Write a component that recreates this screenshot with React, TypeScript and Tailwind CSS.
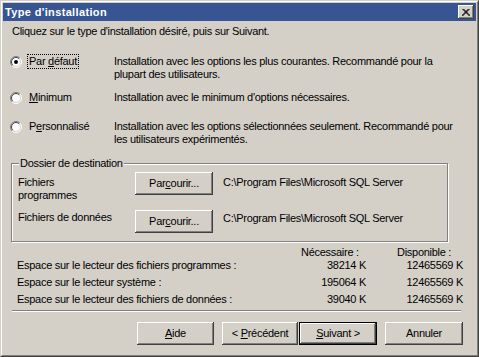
const BTN = 'shadow-[inset_-1px_-1px_0_#404040,inset_1px_1px_0_#ffffff,inset_-2px_-2px_0_#808080]'

function Radio({ checked }: { checked?: boolean }) {
  return (
    <svg width="12" height="12" viewBox="0 0 12 12" className="flex-shrink-0">
      <circle cx="6" cy="6" r="5" fill="#ffffff" />
      <path d="M2.1 9.9 A5.5 5.5 0 0 1 9.9 2.1" fill="none" stroke="#808080" />
      <path d="M9.9 2.1 A5.5 5.5 0 0 1 2.1 9.9" fill="none" stroke="#ffffff" />
      <path d="M2.8 9.2 A4.5 4.5 0 0 1 9.2 2.8" fill="none" stroke="#404040" />
      <path d="M9.2 2.8 A4.5 4.5 0 0 1 2.8 9.2" fill="none" stroke="#d4d0c8" />
      {checked && <circle cx="6" cy="6" r="2" fill="#000000" />}
    </svg>
  )
}

function Button({ children, width, def }: { children: React.ReactNode; width: string; def?: boolean }) {
  return (
    <div
      className={`flex items-center justify-center h-[23px] bg-[#d4d0c8] ${BTN} ${width} ${
        def ? 'outline outline-1 outline-black -outline-offset-1 shadow-[inset_-2px_-2px_0_#404040,inset_2px_2px_0_#ffffff,inset_-3px_-3px_0_#808080]' : ''
      }`}
    >
      {children}
    </div>
  )
}

const OPTIONS = [
  {
    label: <><span>Par </span><span className="underline">d</span><span>éfaut</span></>,
    desc: ['Installation avec les options les plus courantes. Recommandé pour la', 'plupart des utilisateurs.'],
    checked: true,
    mt: 'mt-[17px]',
  },
  {
    label: <><span className="underline">M</span><span>inimum</span></>,
    desc: ["Installation avec le minimum d'options nécessaires."],
    mt: 'mt-[10px]',
  },
  {
    label: <><span>P</span><span className="underline">e</span><span>rsonnalisé</span></>,
    desc: ['Installation avec les options sélectionnées seulement. Recommandé pour', 'les utilisateurs expérimentés.'],
    mt: 'mt-[16px]',
  },
]

const SPACE = [
  { label: 'Espace sur le lecteur des fichiers programmes :', need: '38214 K', free: '12465569 K' },
  { label: 'Espace sur le lecteur système :', need: '195064 K', free: '12465569 K' },
  { label: 'Espace sur le lecteur des fichiers de données :', need: '39040 K', free: '12465569 K' },
]

export default function App() {
  return (
    <div className="w-[479px] h-[357px] font-['Liberation_Sans',Arial,sans-serif] text-[11px] leading-[13px] tracking-[-0.28px] text-black border border-t-[#d4d0c8] border-l-[#d4d0c8] border-r-[#404040] border-b-[#404040]">
      <div className="h-full flex flex-col bg-[#d4d0c8] border border-t-white border-l-white border-r-[#808080] border-b-[#808080] p-[1px]">
        {/* Title bar */}
        <div className="h-[18px] flex items-center justify-between bg-[#375592] pl-[2px] pr-[2px]">
          <span className="text-white font-bold text-[11px] tracking-[0.35px]">Type d'installation</span>
          <div className={`w-[16px] h-[14px] bg-[#d4d0c8] flex items-center justify-center ${BTN}`}>
            <svg width="8" height="7" viewBox="0 0 8 7">
              <path d="M0.5 0 L7.5 7 M1.5 0 L8.5 7 M7.5 0 L0.5 7 M6.5 0 L-0.5 7" stroke="#000" strokeWidth="1" />
            </svg>
          </div>
        </div>

        {/* Body */}
        <div className="flex flex-col">
          <p className="mt-[4px] ml-[9px]">Cliquez sur le type d'installation désiré, puis sur Suivant.</p>

          {OPTIONS.map((o, i) => (
            <div key={i} className={`flex items-start ${o.mt}`}>
              <div className="ml-[7px] w-[104px] flex items-center gap-[6px]">
                <Radio checked={o.checked} />
                <span className={o.checked ? 'border border-dotted border-black px-[1px] -my-[1px] -ml-[1px]' : 'pl-[1px]'}>{o.label}</span>
              </div>
              <div className="flex flex-col">
                {o.desc.map((d, j) => (
                  <span key={j}>{d}</span>
                ))}
              </div>
            </div>
          ))}

          {/* Destination group */}
          <fieldset className="mt-[11px] ml-[8px] w-[437px] h-[85px] border border-[#808080] shadow-[1px_1px_0_#ffffff,inset_1px_1px_0_#ffffff]">
            <legend className="ml-[7px] px-[1px] bg-[#d4d0c8]">Dossier de destination</legend>
            <div className="flex items-start mt-[2px] pl-[6px]">
              <div className="w-[117px] pt-[4px] flex flex-col">
                <span>Fichiers</span>
                <span>programmes</span>
              </div>
              <Button width="w-[78px] h-[22px]">
                <span>Par<span className="underline">c</span>ourir...</span>
              </Button>
              <span className="ml-[10px] pt-[4px]">C:\Program Files\Microsoft SQL Server</span>
            </div>
            <div className="flex items-start mt-[8px] pl-[6px]">
              <div className="w-[117px] pt-[1px]">Fichiers de données</div>
              <Button width="w-[78px] h-[22px]">
                <span>Par<span className="underline">c</span>ourir...</span>
              </Button>
              <span className="ml-[10px] pt-[2px]">C:\Program Files\Microsoft SQL Server</span>
            </div>
          </fieldset>

          {/* Disk space */}
          <div className="mt-[4px] ml-[14px] grid grid-cols-[284px_65px_97px]">
            <span />
            <span>Nécessaire :</span>
            <span className="pl-[31px]">Disponible :</span>
            {SPACE.map((s, i) => (
              <div key={i} className="contents">
                <span className="h-[17px]">{s.label}</span>
                <span className="h-[17px] text-right">{s.need}</span>
                <span className="h-[17px] text-right">{s.free}</span>
              </div>
            ))}
          </div>

          <div className="ml-[9px] w-[449px] h-[2px] border-t border-t-[#808080] border-b border-b-white" />

          {/* Buttons */}
          <div className="mt-[10px] ml-[134px] flex">
            <Button width="w-[77px]">
              <span><span className="underline">A</span>ide</span>
            </Button>
            <div className="w-[8px]" />
            <Button width="w-[76px]">
              <span>&lt; <span className="underline">P</span>récédent</span>
            </Button>
            <div className="w-[1px]" />
            <Button width="w-[78px]" def>
              <span><span className="underline">S</span>uivant &gt;</span>
            </Button>
            <div className="w-[8px]" />
            <Button width="w-[78px]">
              <span>Annuler</span>
            </Button>
          </div>
        </div>
      </div>
    </div>
  )
}
